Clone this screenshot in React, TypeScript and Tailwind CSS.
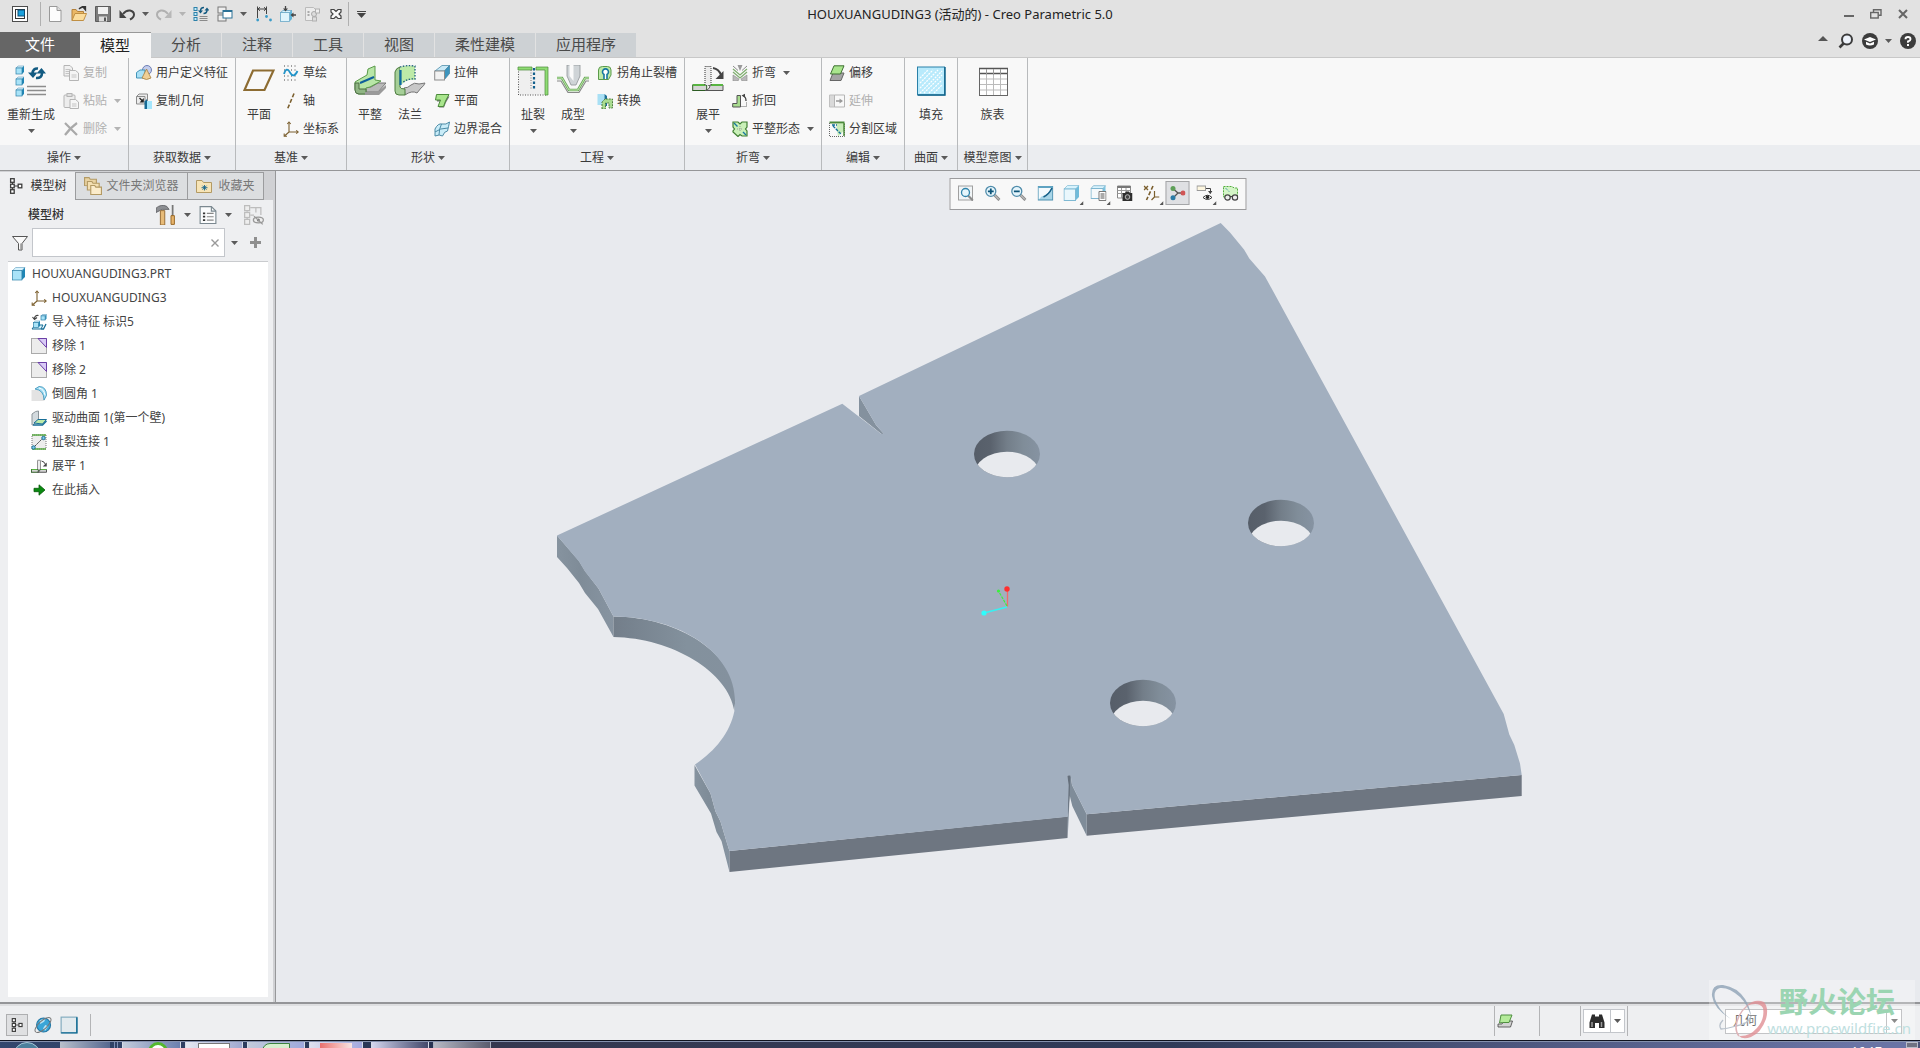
import type { ReactNode } from "react";
import clsx from "clsx";

/* ---------- helpers ---------- */

function Svg({ size = 16, box = 16, children }: { size?: number; box?: number; children: ReactNode }) {
  return (
    <svg width={size} height={size} viewBox={`0 0 ${box} ${box}`} fill="none" className="shrink-0" aria-hidden="true">
      {children}
    </svg>
  );
}

function Caret({ dim }: { dim?: boolean }) {
  return (
    <svg width="7" height="4" viewBox="0 0 7 4" className="shrink-0" aria-hidden="true">
      <path d="M0 0h7L3.5 4z" fill={dim ? "#b4b4b4" : "#5a5a5a"} />
    </svg>
  );
}

function Cube({ x, y, s }: { x: number; y: number; s: number }) {
  const d = s * 0.25;
  return (
    <g>
      <path d={`M${x} ${y + d}l${d} ${-d}h${s - d}l${-d} ${d}z`} fill="#d8f3fd" stroke="#5a9bbd" strokeWidth=".6" />
      <path d={`M${x + s - d} ${y + d}l${d} ${-d}v${s - d}l${-d} ${d}z`} fill="#1f86b5" />
      <rect x={x} y={y + d} width={s - d} height={s - d} fill="#a9e3f8" stroke="#2d81a9" strokeWidth=".7" />
    </g>
  );
}

function TreeNodes({ color = "#3c3c3c" }: { color?: string }) {
  return (
    <g stroke={color} strokeWidth="1.3">
      <path d="M4.5 4v8M6 8h4" strokeWidth="1" />
      <rect x="2.6" y=".7" width="3.6" height="3.6" fill="#fff" />
      <rect x="2.6" y="6.2" width="3.6" height="3.6" fill="#fff" />
      <rect x="2.6" y="11.7" width="3.6" height="3.6" fill="#fff" />
      <rect x="10.2" y="6.2" width="3.6" height="3.6" fill="#fff" />
    </g>
  );
}

function Magnifier({ sign }: { sign?: "plus" | "minus" }) {
  return (
    <>
      <path d="m10 10 5 5" stroke="#8b8b8b" strokeWidth="3" />
      <path d="m10 10 4.6 4.6" stroke="#d6d6d6" strokeWidth="1" />
      <circle cx="6.3" cy="6.3" r="5" fill="#e4f4fb" stroke="#4f8cab" strokeWidth="1.3" />
      {sign && <path d="M3.4 6.3h5.8" stroke="#0d5478" strokeWidth="1.8" />}
      {sign === "plus" && <path d="M6.3 3.4v5.8" stroke="#0d5478" strokeWidth="1.8" />}
    </>
  );
}

function Csys() {
  return (
    <g stroke="#7b5f2e" strokeWidth="1.1">
      <path d="M6 11V1.5M6 11h9M6 11l-4.500 4" />
      <path d="m4.300 3 1.700-2 1.700 2M13.200 9.300 15.200 11l-2 1.700M1.200 12.500v2.800h2.800" />
    </g>
  );
}

function FlatIcon() {
  return (
    <>
      <rect x=".7" y="20" width="14" height="5.500" fill="#d5d5d5" stroke="#2c5c23" />
      <path d="M16 20h15v5.500H13q5-1 5-5.500z" fill="#d5d5d5" stroke="#555" />
      <path d="M1 20h12M19 20h12" stroke="#58b441" strokeWidth="2" />
      <path d="M13 20V1.500h6V20" fill="#ececec" stroke="#333" strokeDasharray="1 1" />
      <path d="M21 3q6 1 8 7" stroke="#444" strokeWidth="2" />
      <path d="M31.500 6v8h-8z" fill="#444" />
    </>
  );
}

/* ---------- icon set ---------- */

const icons: Record<string, ReactNode> = {
  app: (
    <>
      <rect x=".5" y=".5" width="15" height="15" fill="#fff" stroke="#4d4d4d" />
      <rect x="3.500" y="3.500" width="9" height="9" fill="#fff" stroke="#333" />
      <rect x="6" y="4" width="6.500" height="6" fill="#1aa0dc" stroke="#0b4c74" />
    </>
  ),
  fresh: (
    <>
      <path d="M2.500.5h7.500l4 4v11H2.500z" fill="#fdfdfd" stroke="#999" />
      <path d="M10 .5v4h4" fill="#ddd" stroke="#999" />
    </>
  ),
  open: (
    <>
      <path d="M1 14.500v-11h4l1.500 2h6v2" fill="#eab765" stroke="#b3803a" />
      <path d="m1 14.500 3-7h11.500l-3 7z" fill="#fbdc9c" stroke="#c08f43" />
      <path d="M8 3q2-2.500 5-1.500M11.500.5h3v3.500z" stroke="#333" strokeWidth="1.300" fill="#333" />
    </>
  ),
  save: (
    <>
      <path d="M.5.5h15v15H.5z" fill="#7c7c7c" stroke="#5c5c5c" />
      <rect x="3" y="1" width="10" height="7" fill="#f2f2f2" />
      <rect x="4" y="10.500" width="8" height="5" fill="#ddd" />
      <rect x="9" y="11.500" width="2" height="3.500" fill="#555" />
    </>
  ),
  undo: (
    <>
      <path d="M4 8q3-4 7-3.500 4 1 4 4t-4 5" stroke="#444" strokeWidth="2" />
      <path d="M.5 4v8h7z" fill="#444" />
    </>
  ),
  redo: (
    <>
      <path d="M12 8Q9 4 5 4.500q-4 1-4 4t4 5" stroke="#b0b0b0" strokeWidth="2" />
      <path d="M15.500 4v8h-7z" fill="#b8b8b8" />
    </>
  ),
  regen: (
    <>
      <rect x="1" y="1.500" width="3" height="3" fill="#c4ecfb" stroke="#2d81a9" />
      <rect x="1" y="6.500" width="3" height="3" fill="#c4ecfb" stroke="#2d81a9" />
      <rect x="1" y="11.500" width="3" height="3" fill="#c4ecfb" stroke="#2d81a9" />
      <path d="M6.500 10.500h8M6.500 12.500h8M6.500 14.500h8" stroke="#8a8a8a" />
      <path d="M7.500 5q0-3.500 3.500-3.500M14 4q0 3.500-3.500 3.500" stroke="#135b82" strokeWidth="1.500" />
      <path d="M5 4.500h5L7.500 7.500zM11.500 4.500h5L14 1.500z" fill="#135b82" />
    </>
  ),
  windows: (
    <>
      <rect x="1" y="1" width="8" height="6" fill="#eee" stroke="#777" />
      <rect x="1" y="9" width="8" height="6" fill="#eee" stroke="#777" />
      <rect x="6" y="4.500" width="9" height="7.500" fill="#fff" stroke="#2c7297" />
      <path d="M6 5h9" stroke="#2c7297" strokeWidth="2" />
    </>
  ),
  dims: (
    <>
      <path d="M1.500 12V.5M10.500 8V.5M1.500 3h9" stroke="#444" />
      <path d="m4 1.200-2 1.800 2 1.800M8 1.200 10 3 8 4.800" stroke="#444" />
      <circle cx="1.700" cy="14" r="1.400" fill="#3a9cc9" />
      <circle cx="10.500" cy="10.500" r="1.400" fill="#3a9cc9" />
      <circle cx="14.500" cy="14" r="1.400" fill="#3a9cc9" />
    </>
  ),
  cubeArrows: (
    <>
      <path d="M.5 6.500 3 4.500h9L9.500 6.500z" fill="#d8f3fd" stroke="#5a9bbd" strokeWidth=".7" />
      <path d="m9.500 6.500 2.500-2v8.500l-2.500 2.500z" fill="#5fb4d8" />
      <rect x=".5" y="6.500" width="9" height="9" fill="#dff4fc" stroke="#6aa9c8" strokeWidth=".8" />
      <path d="M5.500 0v4M16 9h-4" stroke="#444" strokeWidth="1.300" />
      <path d="M3 2.500h5l-2.500 3zM13.500 6.500v5L10.500 9z" fill="#444" />
    </>
  ),
  ghost: (
    <>
      <path d="M1.500 1.500h8l2 2v11h-10z" fill="#ececec" stroke="#bbb" />
      <path d="M3.500 6h2M3.500 9h2" stroke="#aaa" strokeWidth="2" />
      <circle cx="10" cy="8" r="2.500" fill="#ddd" stroke="#aaa" />
      <rect x="11.500" y="3" width="4" height="4" fill="#eee" stroke="#b0b0b0" />
      <rect x="8.500" y="11" width="4" height="4" fill="#ddd" stroke="#b0b0b0" />
    </>
  ),
  closeWin: (
    <path d="M3 3.500h3l2 2 2-2h3v2.500L11 8l2 2v2.500h-3l-2-2-2 2H3V10l2-2-2-2z" fill="#f8f8f8" stroke="#444" strokeWidth="1.200" />
  ),
  copy: (
    <>
      <path d="M1 .5h6l2.500 2.500v8H1z" fill="#f1f1f1" stroke="#b5b5b5" />
      <path d="M2.500 4.500h5M2.500 6.500h5M2.500 8.500h4" stroke="#c4c4c4" />
      <path d="M6.500 5.500h6l3 2.500v7.500h-9z" fill="#f4f4f4" stroke="#b5b5b5" />
      <path d="M8.500 10h5M8.500 12h5" stroke="#c4c4c4" />
    </>
  ),
  paste: (
    <>
      <rect x="1" y="2" width="11" height="12.500" rx="1" fill="#ededed" stroke="#b5b5b5" />
      <rect x="4" y=".5" width="5" height="3" fill="#e0e0e0" stroke="#b5b5b5" />
      <path d="M7 6.500h5.500l3 2.500v6.500H7z" fill="#f6f6f6" stroke="#b5b5b5" />
      <path d="M9 11h4.500M9 13h4.500" stroke="#c4c4c4" />
    </>
  ),
  remove: <path d="m2 2 12 12M14 2Q7 7 2 14" stroke="#a9a9a9" strokeWidth="2.200" />,
  udf: (
    <>
      <circle cx="11" cy="5" r="4.500" fill="#c3cdec" stroke="#6f7fb5" />
      <path d="M.5 7.500 4 5h5v6l-2 2H.5z" fill="#a9e0f5" stroke="#4394b8" />
      <path d="M10.500 4 15 13q-4.500 3-9 0z" fill="#f0cf95" stroke="#a57d3d" strokeWidth=".8" />
    </>
  ),
  copyGeom: (
    <>
      <path d="M.5 3.500 3 1h8.500v8L9 11H.5z" fill="#ececec" stroke="#8c8c8c" />
      <path d="M.5 3.500H9V11" stroke="#8c8c8c" />
      <path d="m3.500 5 3 3" stroke="#222" strokeWidth="1.200" />
      <path d="M7.800 5v4.500H3.500z" fill="#222" />
      <path d="M8.500 8.500 11 6v10H8.500z" fill="#176b96" />
      <rect x="11" y="8" width="5" height="8" fill="#a5e6fc" />
    </>
  ),
  sketch: (
    <>
      <path d="M1 1h14M1 5h14M1 11h14M1 15h14" stroke="#444" strokeDasharray="1 2.500" />
      <path d="M1 9q2.500-8 6-1.500T14.500 6" stroke="#2394c9" strokeWidth="1.800" />
    </>
  ),
  axis: <path d="M11 .5 4.500 16" stroke="#7b5f2e" strokeWidth="1.600" strokeDasharray="4 2" />,
  csys: <Csys />,
  extrude: (
    <>
      <path d="m1 6 7-5.500h7.500L10.500 6z" fill="#c9e9f6" stroke="#3b7f9f" strokeWidth=".7" />
      <path d="m10.500 6 5-5.500v8l-5 6z" fill="#3d95be" stroke="#3b7f9f" strokeWidth=".7" />
      <rect x=".7" y="6" width="9.800" height="9" fill="#f2f2f2" stroke="#8c8c8c" />
    </>
  ),
  planar: (
    <>
      <path d="M3 3.500h12.500l-3.500 6-2 5H5l2.500-6H3z" fill="#777" />
      <path d="M2.500 1.500H15L11.500 8l-2 5.500H4L6.500 7H1.500z" fill="#a9e58d" stroke="#4b8a3a" />
    </>
  ),
  blend: (
    <>
      <path d="M1 8Q4 2 8 3t7.500-2q-1 5-2 9-3 0-5 5-3-2-7.500 0Q1 12 1 8z" fill="#c9ecf8" stroke="#4b8aa5" />
      <path d="M7.500 3Q5 8 5 14M1 11q5-4 13-4" stroke="#4b8aa5" />
    </>
  ),
  relief: (
    <>
      <path d="M1.500 14.500V5q0-3.500 4-3.500h5q3.500 0 3.500 3.500v5l-2.500 4.500z" fill="#bdeaa8" stroke="#5b9a4a" />
      <path d="M7 14V9.500a3 3 0 1 1 3 0V14" fill="#fff" stroke="#16779f" strokeWidth="1.600" />
    </>
  ),
  convert: (
    <>
      <path d="M.5 1h7v11h-7z" fill="#a9e0f5" />
      <path d="m7.500 1 2.500 2v10h-2.500z" fill="#1a6f98" />
      <path d="M5 16V9l3-3h7.500v9H12v-5H8.500v6z" fill="#a9dc90" stroke="#4d7d3f" strokeDasharray="2 1" />
    </>
  ),
  bend: (
    <>
      <path d="M5.500 0h5L8 6z" fill="#9a9a9a" />
      <path d="m1 4 7 6 7-6M1 7l7 6 7-6" stroke="#7fae6f" strokeWidth="1.300" />
      <path d="m1 1 5 4.500M15 1l-5 4.500" stroke="#8b8b8b" />
      <path d="M1 10v6h5l1-2zM15 10v6h-5l-1-2z" fill="#b9b9b9" stroke="#8a8a8a" strokeWidth=".6" />
    </>
  ),
  bendBack: (
    <>
      <path d="M.7 10.500H5v-8h3.500V14H.7z" fill="#a9dc90" stroke="#555" />
      <path d="M9.500 13.500h5V9" stroke="#666" strokeDasharray="1 1" />
      <path d="M14 8q0-4-2.500-5" stroke="#444" strokeWidth="1.300" />
      <path d="M9.500 2.500 13 .8v4z" fill="#444" />
    </>
  ),
  flatState: (
    <>
      <path d="M1 1h5l2 2 2-2h5v5l-1.500 2 1.500 2v5h-5l-2-1.500L6 15.500 1 11V10l1.500-2L1 6z" fill="#c9f0b8" stroke="#3f7f31" strokeWidth="1.200" />
      <path d="m2 2 3.500 3.500M11 11l3 3" stroke="#16779f" strokeWidth="1.400" />
      <path d="M5 8h6M8 5v6" stroke="#999" strokeDasharray="1 1" />
    </>
  ),
  offset: (
    <>
      <path d="M4 8h11l-3 7.500H1z" fill="#a4a4a4" stroke="#666" />
      <path d="M5 .8h10L11.500 9H1.500z" fill="#a9e58d" stroke="#3f6f33" />
    </>
  ),
  extend: (
    <>
      <path d="M.5 2h5v12h-5z" fill="#d9d9d9" stroke="#c0c0c0" />
      <path d="M5.500 2h10v12h-10z" stroke="#b5b5b5" />
      <path d="M7 8h5" stroke="#999" strokeWidth="1.500" />
      <path d="M10.500 5.500v5L14 8z" fill="#999" />
    </>
  ),
  split: (
    <>
      <path d="M.5 1.500h15" stroke="#4b8a3a" strokeWidth="2" />
      <path d="M9 15.500 15.500 9V2.500H7z" fill="#a9e58d" opacity=".6" />
      <path d="M.5 2v13.500h15V2" stroke="#666" strokeDasharray="1 1" />
      <path d="M3 4h5M4 5l8 8" stroke="#126e98" strokeWidth="1.400" strokeDasharray="3 1" />
      <path d="M15 2v13" stroke="#4b8a3a" strokeWidth="1.500" />
    </>
  ),
  tree: <TreeNodes />,
  folders: (
    <>
      <path d="M.5 7.500v-7h4l1 1.500H11v6z" fill="#e9d3a2" stroke="#b39a64" />
      <path d="M3 11.500V4h4l1 1.500h5.500v6z" fill="#f3dfb2" stroke="#b39a64" />
      <path d="M6 15.500v-8h3.500l1 1.500h5v6.500z" fill="#fbeccb" stroke="#b39a64" />
    </>
  ),
  favorites: (
    <>
      <path d="M.5 14.500v-12h5.500l1.500 2h8v10z" fill="#f7e4b6" stroke="#b39a64" />
      <path d="M8.500 7v5.500M5.500 9.700h6M6.500 7.700l4 4M10.500 7.700l-4 4" stroke="#16648c" strokeWidth=".9" />
    </>
  ),
  tools: (
    <>
      <path d="M0 2.500Q4-1 8.500 1l2 2.500H5L3 4.500 0 6z" fill="#8d8f93" stroke="#55575b" strokeWidth=".6" />
      <path d="M3.500 4.500h3.500v11.500H3.500z" fill="#e7bb78" stroke="#9a7038" strokeWidth=".8" />
      <path d="M13.300 0v9" stroke="#777" strokeWidth="1.400" />
      <path d="M12 8.500h2.700v7H12z" fill="#e7b46c" stroke="#9a6a28" strokeWidth=".8" />
    </>
  ),
  listDoc: (
    <>
      <path d="M1 .5h10l4 4v11H1z" fill="#fbfcfd" stroke="#7b8890" />
      <path d="M11 .5v4h4" stroke="#7b8890" />
      <path d="M3.500 6.500h2M3.500 9.500h2M3.500 12.500h2" stroke="#333" strokeWidth="1.500" />
      <path d="M7 6.500h6M7 9.500h6M7 12.500h6" stroke="#888" />
    </>
  ),
  treeHide: (
    <>
      <g stroke="#bdbdbd">
        <path d="M2.500 5v9M5 8h3M5 2h9M13.500 2v6M9.500 2v4" />
        <rect x=".5" y=".5" width="4" height="4" fill="#eee" />
        <rect x=".5" y="6" width="4" height="4" fill="#eee" />
        <rect x=".5" y="11.500" width="4" height="4" fill="#eee" />
      </g>
      <ellipse cx="11.500" cy="12" rx="4" ry="2.300" fill="#eee" stroke="#999" />
      <circle cx="11.500" cy="12" r="1.200" fill="#777" />
      <path d="m8 9 7 6.500" stroke="#999" />
    </>
  ),
  funnel: (
    <>
      <path d="M.5 1.500h15L10 8.500V15H6.500V8.500z" fill="#fafafa" stroke="#555" />
      <path d="M9 8.500v6" stroke="#999" strokeWidth="1.500" />
    </>
  ),
  part: <Cube x={1.500} y={1.500} s={12.500} />,
  importFeat: (
    <>
      <path d="M1 15 4 11h8l-2 4z" fill="#d8f2fb" stroke="#186e96" />
      <path d="M10 15h2.500l2.500-5" stroke="#186e96" strokeWidth="1.300" />
      <Cube x={2.500} y={7} s={6.500} />
      <Cube x={10} y={.5} s={5.500} />
      <path d="M7.500 1.500Q3.500 1 3.500 5M1.500 3l2 2.500L6 3.500" stroke="#444" strokeWidth="1.200" />
    </>
  ),
  removeFeat: (
    <>
      <rect x=".5" y=".5" width="15" height="15" fill="#ececec" stroke="#aaa" />
      <path d="M7 .5h8.500v9z" fill="#d9cbf6" />
      <path d="m7 .5 8.500 9V.5z" stroke="#6b3fa6" />
    </>
  ),
  round: (
    <>
      <path d="M.5 4h6q7 0 7 11H.5z" fill="#e3e3e3" />
      <path d="M4 3 8 .5q7.500 0 7.500 9L13 14q0-10-9-11z" fill="#a5dff5" stroke="#318db5" strokeWidth=".8" />
      <path d="M8 2q5 1 6 7" stroke="#fff" />
    </>
  ),
  driven: (
    <>
      <path d="M1 4Q5 .5 7.500 1v9L2 15H1z" fill="#d3dade" stroke="#8c959a" />
      <path d="m3 13 4-3.500h8.500L11.500 14z" fill="#bdeaa8" stroke="#186e96" />
      <path d="M2 15h9.500l4-4" stroke="#186e96" strokeWidth="1.400" />
    </>
  ),
  ripConnect: (
    <>
      <rect x="1" y="1" width="14" height="14" fill="#ededed" stroke="#777" strokeDasharray="1 1" />
      <path d="M1 1h14M1 15h14" stroke="#59a944" strokeWidth="1.500" />
      <path d="m2 14 11-11" stroke="#333" strokeDasharray="2 1" />
      <circle cx="12.500" cy="4" r="1.700" fill="#7ec9e8" stroke="#186e96" />
      <circle cx="2.500" cy="13.500" r="1.700" fill="#7ec9e8" stroke="#186e96" />
    </>
  ),
  insertHere: <path d="M3 6.300h5V2.800l6 5.200-6 5.200V9.700H3z" fill="#0a8a10" stroke="#07590b" strokeWidth=".8" />,
  refit: (
    <>
      <rect x="1" y="1" width="14" height="14" fill="#f1f5f7" stroke="#a0a0a0" />
      <path d="m10.500 10.500 5 5" stroke="#8b8b8b" strokeWidth="2.200" />
      <circle cx="8" cy="7.500" r="4" fill="#e6f6fc" stroke="#2f83aa" strokeWidth="1.300" />
    </>
  ),
  zoomIn: <Magnifier sign="plus" />,
  zoomOut: <Magnifier sign="minus" />,
  repaint: (
    <>
      <rect x=".7" y="1.500" width="14.500" height="13.500" fill="#a8d5e8" stroke="#4d90af" />
      <path d="M1.200 2h13.500Q11 10 4 11.500L1.200 14.500z" fill="#f4fafd" />
      <path d="M14.500 3Q11 10 6 12" stroke="#176087" strokeWidth="1.600" />
      <rect x=".7" y="1" width="14.500" height="2" fill="#5fa3c2" />
    </>
  ),
  shaded: (
    <>
      <path d="M.5 4 4 .5h11.500L12 4z" fill="#d8f3fd" stroke="#7fb9d3" strokeWidth=".7" />
      <path d="M12 4 15.500.5V12L12 15.500z" fill="#6fbbda" />
      <rect x=".5" y="4" width="11.500" height="11.500" fill="#eaf7fc" stroke="#7fb9d3" />
    </>
  ),
  views: (
    <>
      <path d="M.5 3.500 3 .7h12l-2.500 2.800z" fill="#d8f3fd" stroke="#6ba9c6" strokeWidth=".7" />
      <path d="M12.500 3.500 15 .7v10l-2.500 2.500z" fill="#7cc5e2" />
      <rect x=".5" y="3.500" width="12" height="10" fill="#f5f9fb" stroke="#7fb6d0" />
      <path d="M8.500 6.500h7v9h-7z" fill="#fff" stroke="#777" />
      <path d="M10 9h4M10 11h4M10 13h4" stroke="#555" />
    </>
  ),
  capture: (
    <>
      <path d="M1 1h13v12H1z" fill="#fff" stroke="#888" />
      <path d="M1 2h13" stroke="#777" strokeWidth="2" />
      <path d="M1 5.500h13M1 8.500h13M5 3v10M9.500 3v5" stroke="#9a9a9a" />
      <path d="M6 8h2.500l1-1.500h3L13.500 8H16v8H6z" fill="#2e2e2e" />
      <circle cx="11" cy="12" r="2.300" fill="#444" stroke="#bbb" />
    </>
  ),
  datumDisp: (
    <>
      <path d="m.5 1 4 4M4.500 1l-4 4" stroke="#7b5f2e" strokeWidth="1.400" />
      <path d="M9.500 1 3 15" stroke="#7b5f2e" strokeWidth="1.600" strokeDasharray="4 2" />
      <path d="M11 6v6h5M11 12l-3 3" stroke="#7b5f2e" strokeWidth="1.200" />
    </>
  ),
  annot: (
    <>
      <path d="m4 4 4.500 4H14M8.500 8 4 12.500" stroke="#555" strokeWidth="1.300" />
      <circle cx="3.500" cy="3.500" r="2.500" fill="#5e9f58" />
      <circle cx="3.500" cy="12.800" r="2.500" fill="#2b7ba6" />
      <circle cx="13.500" cy="8" r="2.500" fill="#d05555" />
    </>
  ),
  spin: (
    <>
      <rect x=".5" y="1" width="8.500" height="4.500" fill="#fdf6df" stroke="#999" />
      <path d="M9.500 3.500h4.500v5" stroke="#444" />
      <path d="M11.500 6h4.500l-2.300 3z" fill="#444" />
      <path d="M6.500 12.500q4.500-4.500 9 0-4.500 4-9 0z" fill="#fff" stroke="#333" />
      <circle cx="11" cy="12.300" r="1.700" fill="#222" />
    </>
  ),
  glasses: (
    <>
      <path d="M1 1.500h8L12 3h3v9H1z" fill="#d4f5c6" stroke="#53ad3e" strokeDasharray="2 1" />
      <path d="m3 3 4 4" stroke="#16779f" strokeDasharray="1 1" />
      <circle cx="5" cy="12.500" r="2.700" fill="#eee" stroke="#444" strokeWidth="1.200" />
      <circle cx="12.500" cy="12.500" r="2.700" fill="#eee" stroke="#444" strokeWidth="1.200" />
      <path d="M7.500 11.500h2.500" stroke="#444" strokeWidth="1.200" />
    </>
  ),
  globe: (
    <>
      <circle cx="8.500" cy="8" r="6.200" fill="#3aa5d8" stroke="#2478a6" />
      <path d="M5 4q3-2 5-1L9 5 5.500 7zM10 8l2.500 1L10 13l-2-2z" fill="#b8e4f5" />
      <ellipse cx="8" cy="8" rx="9" ry="3.600" transform="rotate(-42 8 8)" stroke="#777" strokeWidth=".9" />
    </>
  ),
  window: (
    <>
      <rect x="1" y="1" width="14" height="14" fill="#e2eaee" stroke="#7fa9bd" />
      <path d="M1 15h14V1" stroke="#0f6a93" strokeWidth="1.300" />
    </>
  ),
  geomFilter: (
    <>
      <path d="M1 11h4l2-3h8.500l-2 6H1z" fill="#d2d2d2" stroke="#444" strokeWidth=".8" />
      <path d="M4 2h11l-3 7.500H5.500L2.500 10z" fill="#b4eb9a" stroke="#4f8f40" />
    </>
  ),
  binoculars: (
    <>
      <path d="M3 1.500h3v2h4v-2h3l2.500 8V15H10v-5H6v5H.5V9.500z" fill="#2c2c2c" />
      <path d="M3 9v5M12.500 9v5" stroke="#999" strokeWidth="1.500" />
    </>
  ),
  search: (
    <>
      <path d="M6 10 1.500 14.500" stroke="#3c3c3c" strokeWidth="2.600" />
      <circle cx="9" cy="6.500" r="5" fill="#eef3fb" stroke="#3c3c3c" strokeWidth="2" />
    </>
  ),
  learn: (
    <>
      <circle cx="8" cy="8" r="8" fill="#3c3c3c" />
      <path d="M2 6.500 8 4l6 2.500L8 9z" fill="#fff" />
      <path d="M4 8.800v2.700q4 2 8 0V8.800L8 10.500z" fill="#fff" />
    </>
  ),
  help: (
    <>
      <circle cx="8" cy="8" r="8" fill="#3c3c3c" />
      <path d="M5.500 6.300Q5.500 4 8 4t2.500 2.200Q10.500 7.500 8 8.500v1.300" stroke="#fff" strokeWidth="1.900" />
      <rect x="7" y="11" width="2" height="2" fill="#fff" />
    </>
  ),
  // 32px ribbon icons
  regenBig: (
    <>
      <Cube x={1} y={1} s={8} />
      <Cube x={1} y={12} s={8} />
      <Cube x={1} y={23} s={8} />
      <path d="M12 21.500h19M12 25.500h19M12 29.500h19" stroke="#8d8d8d" strokeWidth="1.500" />
      <path d="M23 3.500q-5-.5-5.500 5M21 13q6 .5 6-5" stroke="#135b82" strokeWidth="2.600" />
      <path d="M13 7.500h9.500L18 13zM21.500 8.500H31L26.500 3z" fill="#135b82" />
    </>
  ),
  plane: <path d="M10 5.500h20.500L21.500 25H1.500z" stroke="#8d6c32" strokeWidth="2.200" />,
  flat: (
    <>
      <path d="M10 22h7l7-4h8l-8 9H7z" fill="#b9b9b9" stroke="#777" />
      <path d="M14 4 21 1v14l6 1-11 6-4 1v6H4q-3-1-3-5v-7l5-3 7-4z" fill="#b8e6a7" stroke="#5b9a4a" />
      <path d="M1 18h4v6h7v5H5q-4 0-4-4z" fill="#8fb583" stroke="#4d6f43" />
      <path d="m6 18 14-6" stroke="#0e5f9a" strokeWidth="2" />
      <path d="m11 27 14-1 7-6v3l-7 7H11z" fill="#9a9a9a" />
    </>
  ),
  flange: (
    <>
      <path d="M10 23q4 0 7-3t8-1l6-1q-1 3-4 5l-4 5q-5-3-12 2z" fill="#c8c8c8" stroke="#777" />
      <path d="M1 7Q2 3 6 2v20q0 2 5 2v6H5q-4 0-4-4z" fill="#a6cf98" stroke="#4d7d3f" />
      <path d="M6 2q6-2 15-1v14q-8-1-13 4H6z" fill="#bdeaa8" />
      <path d="M6 2q6-2 15-1v13q-7-1-13 4" stroke="#205f7d" strokeWidth="1.300" strokeDasharray="1.500 1.500" />
      <path d="M6.500 5v15" stroke="#0e6aa2" strokeWidth="2.200" />
    </>
  ),
  rip: (
    <>
      <path d="M1.500 4h28v26h-28z" fill="#efefef" />
      <path d="M1.500 4v26h28" stroke="#555" strokeDasharray="1 1.500" />
      <path d="M1 2h14v3H1zM19 2h12v28h-3V5h-9z" fill="#8fdc74" stroke="#4b8a3a" strokeWidth=".7" />
      <path d="M17 3v22" stroke="#115f8c" strokeWidth="2.200" strokeDasharray="2.500 2" />
      <path d="M14 5v20" stroke="#777" strokeDasharray="1 1.500" />
    </>
  ),
  form: (
    <>
      <path d="M10 0h13v11l-4 9h-5l-4-9z" fill="#cfd4d7" stroke="#8d9295" strokeWidth=".8" />
      <path d="M12.500 0h4v16l-4-5z" fill="#fafafa" />
      <path d="M0 13h5l7 12h9l7-12h4" stroke="#6fa860" strokeWidth="2.600" />
      <path d="M0 16h4l7 11.500h11L29 16h3" stroke="#888" strokeWidth="1.200" />
      <path d="M0 13h5l7 12h9l7-12h4" stroke="#bdeaa8" strokeWidth="1" />
    </>
  ),
  unbend: <FlatIcon />,
  unbendSmall: (
    <g transform="scale(.5) translate(0 3)" strokeWidth="2">
      <FlatIcon />
    </g>
  ),
  fillBig: (
    <>
      <rect x="2.500" y="2" width="27" height="28" fill="#b8eafc" stroke="#2980a8" />
      <path d="m5 13 8-8M5 18 18 5M5 23 23 5M5 28 27 6M9 28l18-18M14 28l13-13M19 28l8-8" stroke="#fff" strokeWidth="1.300" strokeDasharray="2 1" />
      <path d="M3 30h27V2" stroke="#14658c" strokeWidth="1.500" />
    </>
  ),
  family: (
    <>
      <rect x="2.500" y="3.500" width="28" height="27" fill="#fff" stroke="#666" />
      <path d="M3 14h27M3 19.500h27M3 25h27M9.500 9v21M16.500 9v21M23.500 9v21" stroke="#bbb" />
      <path d="M2 3.500h29M3 8.500h27" stroke="#555" strokeWidth="1.600" />
      <path d="M9.500 4v5M16.500 4v5M23.500 4v5" stroke="#999" />
    </>
  ),
};

function Icon({ name, size = 16, box = 16 }: { name: string; size?: number; box?: number }) {
  return (
    <Svg size={size} box={box}>
      {icons[name]}
    </Svg>
  );
}

/* ---------- title bar ---------- */

function QuickButton({ name }: { name: string }) {
  return (
    <button aria-label={name} className="flex h-6 w-6 items-center justify-center">
      <Icon name={name} />
    </button>
  );
}

function QuickCaret({ dim }: { dim?: boolean }) {
  return (
    <button aria-label="more" className="flex h-6 w-[13px] items-center justify-center">
      <Caret dim={dim} />
    </button>
  );
}

function TitleBar() {
  return (
    <header className="grid h-8 grid-cols-[1fr_auto_1fr] items-start pt-0.5">
      <div className="flex items-center">
        <button aria-label="app" className="ml-2 flex h-6 w-6 items-center justify-center">
          <Icon name="app" />
        </button>
        <div className="mr-0.5 ml-2 h-6 w-px bg-[#b0b0b0]" />
        <QuickButton name="fresh" />
        <QuickButton name="open" />
        <QuickButton name="save" />
        <QuickButton name="undo" />
        <QuickCaret />
        <QuickButton name="redo" />
        <QuickCaret dim />
        <QuickButton name="regen" />
        <QuickButton name="windows" />
        <QuickCaret />
        <div className="ml-0.5 flex">
          <QuickButton name="dims" />
          <QuickButton name="cubeArrows" />
          <QuickButton name="ghost" />
          <QuickButton name="closeWin" />
        </div>
        <div className="h-6 w-px bg-[#b0b0b0]" />
        <button aria-label="customize" className="flex h-6 w-6 items-center justify-center">
          <svg width="9" height="7" viewBox="0 0 9 7">
            <path d="M0 .5h9" stroke="#444" />
            <path d="M0 2h9L4.500 7z" fill="#444" />
          </svg>
        </button>
      </div>
      <h1 className="text-[13px] leading-6 text-[#222]">HOUXUANGUDING3 (活动的) - Creo Parametric 5.0</h1>
      <div className="flex h-6 justify-end gap-[3px] pr-[5px]">
        <button aria-label="minimize" className="flex w-6 items-center justify-center">
          <svg width="10" height="10" viewBox="0 0 10 10">
            <path d="M0 7h10" stroke="#666" strokeWidth="2" />
          </svg>
        </button>
        <button aria-label="restore" className="flex w-6 items-center justify-center">
          <svg width="12" height="10" viewBox="0 0 12 10" fill="none" stroke="#666">
            <path d="M3.500 3V.8h7.500v5.500H8.500" strokeWidth="1.400" />
            <rect x=".7" y="3.500" width="7.500" height="5.500" strokeWidth="1.400" />
          </svg>
        </button>
        <button aria-label="close" className="flex w-6 items-center justify-center">
          <svg width="10" height="10" viewBox="0 0 10 10">
            <path d="m1 1 8 8M9 1 1 9" stroke="#666" strokeWidth="2" />
          </svg>
        </button>
      </div>
    </header>
  );
}

const tabs = ["分析", "注释", "工具", "视图", "柔性建模", "应用程序"];

function TabBar() {
  return (
    <nav className="flex h-[26px] text-[15px] leading-[22px] text-[#4a4a4a]">
      <button className="bg-[#666] px-[25px] pb-0.5 text-white">文件</button>
      <button className="border-t border-[#999] bg-[#f8f8f8] pr-[21px] pb-0.5 pl-5 text-[#222]">模型</button>
      <div className="flex gap-px border-b border-[#c8c8c8] pt-px">
        {tabs.map((tab) => (
          <button key={tab} className="bg-[#cdd1d4] px-5 pb-0.5">
            {tab}
          </button>
        ))}
      </div>
      <div className="flex flex-1 items-start justify-end gap-2 border-b border-[#c8c8c8] pr-1">
        <button aria-label="collapse" className="mr-0.5 flex h-3 items-center">
          <svg width="10" height="5" viewBox="0 0 10 5">
            <path d="M0 5h10L5 0z" fill="#555" />
          </svg>
        </button>
        <button aria-label="search" className="pt-px">
          <Icon name="search" />
        </button>
        <div className="flex items-center gap-[7px] pt-px">
          <button aria-label="learn">
            <Icon name="learn" />
          </button>
          <Caret />
        </div>
        <button aria-label="help" className="pt-px">
          <Icon name="help" />
        </button>
      </div>
    </nav>
  );
}

/* ---------- ribbon ---------- */

function Big({ icon, label, menu, className = "w-10" }: { icon: string; label: string; menu?: boolean; className?: string }) {
  return (
    <button className={clsx("flex flex-col items-center pt-1.5", className)}>
      <Icon name={icon} size={32} box={32} />
      <span className="mt-2 mb-1 leading-5">{label}</span>
      {menu && <Caret />}
    </button>
  );
}

function Small({ icon, label, menu, disabled }: { icon: string; label: string; menu?: boolean; disabled?: boolean }) {
  return (
    <button disabled={disabled} className="flex h-7 items-center gap-1 disabled:text-[#b0b0b0]">
      <Icon name={icon} />
      <span>{label}</span>
      {menu && (
        <span className="ml-[3px] flex">
          <Caret dim={disabled} />
        </span>
      )}
    </button>
  );
}

function Group({ title, className, children }: { title: string; className: string; children: ReactNode }) {
  return (
    <section className={clsx("flex flex-col border-r border-[#b8babc]", className)}>
      <div className="flex flex-1 pt-px">{children}</div>
      <button className="flex h-[25px] items-center justify-center gap-[3px] bg-[#ebedf0]">
        {title}
        <Caret />
      </button>
    </section>
  );
}

function Ribbon() {
  return (
    <div className="flex h-[113px] border-b border-[#959698] bg-[#f8f8f8] text-xs whitespace-nowrap text-[#3a3a3a]">
      <Group title="操作" className="w-[129px]">
        <Big icon="regenBig" label="重新生成" menu className="w-[62px]" />
        <div className="pl-px">
          <Small icon="copy" label="复制" disabled />
          <Small icon="paste" label="粘贴" menu disabled />
          <Small icon="remove" label="删除" menu disabled />
        </div>
      </Group>
      <Group title="获取数据" className="w-[107px]">
        <div className="pl-[7px]">
          <Small icon="udf" label="用户定义特征" />
          <Small icon="copyGeom" label="复制几何" />
        </div>
      </Group>
      <Group title="基准" className="w-[111px]">
        <Big icon="plane" label="平面" className="w-[46px]" />
        <div className="pl-px">
          <Small icon="sketch" label="草绘" />
          <Small icon="axis" label="轴" />
          <Small icon="csys" label="坐标系" />
        </div>
      </Group>
      <Group title="形状" className="w-[163px]">
        <div className="flex px-[3px]">
          <Big icon="flat" label="平整" />
          <Big icon="flange" label="法兰" />
        </div>
        <div className="pl-px">
          <Small icon="extrude" label="拉伸" />
          <Small icon="planar" label="平面" />
          <Small icon="blend" label="边界混合" />
        </div>
      </Group>
      <Group title="工程" className="w-[175px]">
        <div className="flex px-[3px]">
          <Big icon="rip" label="扯裂" menu />
          <Big icon="form" label="成型" menu />
        </div>
        <div className="pl-px">
          <Small icon="relief" label="拐角止裂槽" />
          <Small icon="convert" label="转换" />
        </div>
      </Group>
      <Group title="折弯" className="w-[137px]">
        <div className="flex px-[3px]">
          <Big icon="unbend" label="展平" menu />
        </div>
        <div className="pl-px">
          <Small icon="bend" label="折弯" menu />
          <Small icon="bendBack" label="折回" />
          <Small icon="flatState" label="平整形态" menu />
        </div>
      </Group>
      <Group title="编辑" className="w-[83px]">
        <div className="pl-[7px]">
          <Small icon="offset" label="偏移" />
          <Small icon="extend" label="延伸" disabled />
          <Small icon="split" label="分割区域" />
        </div>
      </Group>
      <Group title="曲面" className="w-[53px]">
        <Big icon="fillBig" label="填充" className="w-full" />
      </Group>
      <Group title="模型意图" className="w-[70px]">
        <Big icon="family" label="族表" className="w-full" />
      </Group>
      <div className="mt-[87px] flex-1 bg-[#ebedf0]" />
    </div>
  );
}

/* ---------- model tree ---------- */

const features = [
  { icon: "csys", label: "HOUXUANGUDING3" },
  { icon: "importFeat", label: "导入特征 标识5" },
  { icon: "removeFeat", label: "移除 1" },
  { icon: "removeFeat", label: "移除 2" },
  { icon: "round", label: "倒圆角 1" },
  { icon: "driven", label: "驱动曲面 1(第一个壁)" },
  { icon: "ripConnect", label: "扯裂连接 1" },
  { icon: "unbendSmall", label: "展平 1" },
  { icon: "insertHere", label: "在此插入" },
];

function Sidebar() {
  return (
    <aside className="flex w-[276px] shrink-0 flex-col border-r border-[#97989a] bg-[#d0d1d4] pt-px pr-0.5 text-xs text-[#444]">
      <div className="flex h-7">
        <button className="flex w-[75px] items-center justify-center gap-1.5 bg-[#eeeff1] text-[#333]">
          <Icon name="tree" />
          模型树
        </button>
        <button className="flex w-[113px] items-center justify-center gap-1 border border-[#9b9c9e] bg-[#dcdee0] text-[#777]">
          <Icon name="folders" size={18} />
          文件夹浏览器
        </button>
        <button className="flex w-[76px] items-center justify-center gap-1.5 border border-l-0 border-[#9b9c9e] bg-[#dcdee0] text-[#777]">
          <Icon name="favorites" />
          收藏夹
        </button>
      </div>
      <div className="flex flex-1 flex-col bg-[#eeeff1] pr-1 pb-[5px] pl-2">
        <div className="flex h-7 items-center pt-px pl-5">
          <h2 className="flex-1 font-medium text-[#333]">模型树</h2>
          <div className="flex items-center gap-2 pr-[5px]">
            <button aria-label="settings" className="flex items-center gap-2">
              <Icon name="tools" size={20} />
              <Caret />
            </button>
            <button aria-label="display" className="flex items-center gap-2">
              <Icon name="listDoc" size={18} />
              <Caret />
            </button>
            <button aria-label="hide" className="ml-1">
              <Icon name="treeHide" size={20} />
            </button>
          </div>
        </div>
        <div className="mb-1 flex h-[29px] items-center pl-1">
          <label htmlFor="tree-filter" aria-label="filter">
            <Icon name="funnel" />
          </label>
          <div className="ml-1 flex h-[29px] w-[193px] items-center border border-[#c3c6cb] bg-white pr-[5px]">
            <input id="tree-filter" className="min-w-0 flex-1 px-1 outline-none" />
            <button aria-label="clear">
              <svg width="8" height="8" viewBox="0 0 8 8">
                <path d="m.5.5 7 7M7.500.5l-7 7" stroke="#999" strokeWidth="1.400" />
              </svg>
            </button>
          </div>
          <button aria-label="options" className="ml-1.5">
            <Caret />
          </button>
          <button aria-label="add" className="ml-3">
            <svg width="11" height="11" viewBox="0 0 11 11">
              <path d="M5.500 0v11M0 5.500h11" stroke="#8f8f8f" strokeWidth="3" />
            </svg>
          </button>
        </div>
        <ul className="mr-px flex-1 border-t border-[#c9cbce] bg-white">
          <li className="flex h-6 items-center gap-[5px] pl-[3px]">
            <Icon name="part" />
            HOUXUANGUDING3.PRT
          </li>
          {features.map((feature) => (
            <li key={feature.label} className="flex h-6 items-center gap-[5px] pl-[23px]">
              <Icon name={feature.icon} />
              {feature.label}
            </li>
          ))}
        </ul>
      </div>
    </aside>
  );
}

/* ---------- graphics area ---------- */

const viewTools = [
  { icon: "refit" },
  { icon: "zoomIn" },
  { icon: "zoomOut" },
  { icon: "repaint" },
  { icon: "shaded", more: true },
  { icon: "views", more: true },
  { icon: "capture" },
  { icon: "datumDisp", more: true },
  { icon: "annot", active: true },
  { icon: "spin", more: true },
  { icon: "glasses" },
];

const holes = [
  { cx: 1007, cy: 454 },
  { cx: 1281, cy: 523 },
  { cx: 1143, cy: 703 },
];

function Model() {
  return (
    <svg viewBox="276 171 1644 831" className="h-full w-full" fill="none" role="img" aria-label="HOUXUANGUDING3">
      <defs>
        <linearGradient id="bore">
          <stop offset="0" stopColor="#565e69" />
          <stop offset=".25" stopColor="#5a626d" />
          <stop offset=".5" stopColor="#737e89" />
          <stop offset=".75" stopColor="#808d99" />
          <stop offset="1" stopColor="#8693a2" />
        </linearGradient>
        <linearGradient id="arc">
          <stop offset="0" stopColor="#737e8a" />
          <stop offset=".6" stopColor="#83919d" />
          <stop offset="1" stopColor="#84919e" />
        </linearGradient>
        <linearGradient id="edge">
          <stop offset="0" stopColor="#86939f" />
          <stop offset=".4" stopColor="#7f8c98" />
          <stop offset="1" stopColor="#8794a1" />
        </linearGradient>
        {holes.map((hole) => (
          <clipPath key={hole.cx} id={`hole-${hole.cx}`}>
            <ellipse cx={hole.cx} cy={hole.cy} rx="33" ry="23.300" />
          </clipPath>
        ))}
      </defs>
      {/* side walls */}
      <path d="M557 535.500 579 561l6 10 13.500 17.500 15 28V637L598 609l-13-16-6-10-12-15-10-11z" fill="url(#edge)" />
      <path d="M613.500 616.500C680 617 736 655 735.500 698L734.300 711C729 672 672 638 613.500 637z" fill="url(#arc)" />
      <path d="m694.500 765 16 28.500 5 18 5 10 6 20 3 9.500v21l-8-31-5-9-5.500-18.500-16.500-28z" fill="url(#edge)" />
      <path d="m729.500 851 338.500-34.500-.5 21.500-338 34zM1086.700 814.300l435-39.300v21l-435 39.700z" fill="#6e7681" />
      <path d="m1067.300 775.500 3.400-.5 1.300 10 14.700 29.300v21.400L1072.300 806l-2.600-10.500-2 42z" fill="#7f8c99" />
      <path d="m1067.300 775.500 3-.5-.6 20.500-2 21z" fill="#66707c" />
      <path d="M859 396v20l22.500 18h2.500l-8-9z" fill="#84919e" />
      {/* top face */}
      <path
        d="M557 535.500 842.300 403.700 881 433.700h2.700L876 425l-17-29L1220.700 223l9.300 9.400 14 17 5.300 9 15.700 18L1503.700 714l5.600 20.600 5 10.400 5.700 18.500 1.700 11.500-435 39.300L1072 785l-1.300-9.500h-3.400l1.400 9.500-1 31.700L729.500 851l-3-9.500-6-20-5-10-5-18-15.500-29C715 751 730 733 734.400 711 742 658 685 617 613.500 616.500l-15-28L585 571.500l-6-10z"
        fill="#a2afbf"
      />
      {holes.map((hole) => (
        <g key={hole.cx} clipPath={`url(#hole-${hole.cx})`}>
          <rect x={hole.cx - 33} y={hole.cy - 24} width="66" height="48" fill="url(#bore)" />
          <ellipse cx={hole.cx} cy={hole.cy + 21} rx="33" ry="23.300" fill="#e8eaee" />
        </g>
      ))}
      {/* spin centre */}
      <path d="M1007.500 606.500V590" stroke="#f26a6a" strokeWidth="1.300" />
      <path d="m1007 606-8.500-15" stroke="#3df03d" strokeWidth="1.200" strokeDasharray="3 1" />
      <path d="M1007 607 984 613" stroke="#35f2f2" strokeWidth="1.300" />
      <circle cx="1007" cy="589" r="2.700" fill="#ff2f2f" />
      <circle cx="998.500" cy="591" r="1.600" fill="#3cf03c" />
      <circle cx="984" cy="613" r="2.600" fill="#2ffcfc" />
    </svg>
  );
}

function Viewport() {
  return (
    <main className="relative min-w-0 flex-1 bg-[#e8eaee]">
      <div className="absolute top-[7px] left-1/2 flex h-8 w-[297px] -translate-x-1/2 items-center justify-between border border-[#9b9b9d] bg-[#f8f8f8] px-[3px] pb-0.5">
        {viewTools.map((tool) => (
          <button
            key={tool.icon}
            aria-label={tool.icon}
            className={clsx(
              "relative flex h-6 w-6 items-center justify-center",
              tool.active && "border border-[#a5a6a8] bg-[#dfe0e3]"
            )}
          >
            <Icon name={tool.icon} />
            {tool.more && (
              <svg width="4" height="4" viewBox="0 0 4 4" className="absolute right-0 bottom-0">
                <path d="M4 0v4H0z" fill="#555" />
              </svg>
            )}
          </button>
        ))}
      </div>
      <Model />
    </main>
  );
}

/* ---------- status bar and taskbar ---------- */

function Watermark() {
  return (
    <div className="pointer-events-none absolute right-[5px] -bottom-0.5 h-[62px] w-[206px] bg-white/30">
      <svg width="60" height="62" viewBox="0 0 60 62" fill="none" className="absolute top-0 left-0">
        <path d="M3 16Q2 4 14 5q14 2 22 14 5 8 6 17-4-12-11-19Q20 7 11 8q-7 2-5 11 4 12 16 20Q5 29 3 16z" fill="#8fa3b5" opacity=".8" />
        <path d="M42 36Q40 44 27 46q-10 3-15 3-3-4 2-9" stroke="#b9c2cc" strokeWidth="1.300" />
        <path d="M37 26Q46 18 55 22q5 6 2 17-5 14-15 18-8 3-12-1 10 1 18-8 8-9 6-20-4-7-17-2z" fill="#e08e93" opacity=".8" />
        <path d="M30 56q-6-7 0-20 3-6 8-10" stroke="#dfb4b8" strokeWidth="1.500" />
      </svg>
      <div className="absolute top-0 right-0 text-right">
        <p className="pr-5 font-['Noto_Sans_CJK_SC',sans-serif] text-[29px] leading-10 font-bold text-[#9bd5b2]">野火论坛</p>
        <p className="pr-1 text-[15px] leading-4 text-[#bfe0df]">www.proewildfire.cn</p>
      </div>
    </div>
  );
}

function StatusBar() {
  return (
    <footer className="relative flex h-[38px] items-stretch border-t-2 border-[#949598] bg-[#eeeff1] text-xs">
      <div className="flex flex-1 items-center gap-2.5 border-t-2 border-[#dedfe1] pt-1 pl-1.5">
        <button aria-label="navigator" className="flex h-[22px] w-[22px] items-center justify-center border border-[#aeafb1] bg-[#dfe0e2]">
          <Icon name="tree" size={14} />
        </button>
        <button aria-label="browser" className="-ml-1">
          <Icon name="globe" size={18} />
        </button>
        <button aria-label="full screen" className="-ml-0.5">
          <Icon name="window" size={18} />
        </button>
        <div className="ml-0.5 h-[22px] w-px bg-[#b3b4b6]" />
      </div>
      <div className="flex items-stretch border-t-2 border-[#dedfe1] pb-1">
        <div className="flex w-[45px] items-center border-l border-[#b3b4b6] pl-0.5">
          <Icon name="geomFilter" />
        </div>
        <div className="w-[41px] border-l border-[#b3b4b6]" />
        <div className="flex w-12 items-center border-x border-[#b3b4b6] pl-0.5">
          <div className="flex h-6 w-[42px] border border-[#c3c6cb] bg-white">
            <button aria-label="find" className="flex flex-1 items-center justify-center border-r border-[#c3c6cb]">
              <Icon name="binoculars" />
            </button>
            <button aria-label="find options" className="flex w-[13px] items-center justify-center">
              <Caret />
            </button>
          </div>
        </div>
        <div className="relative mr-[18px] ml-[97px] self-center">
          <select aria-label="selection filter" className="block h-[25px] w-[177px] appearance-none border border-[#a9abae] bg-white pl-[7px] text-[#333] outline-none">
            <option>几何</option>
          </select>
          <div className="pointer-events-none absolute inset-y-0 right-0 flex w-4 items-center justify-center border-l border-[#a9abae]">
            <Caret />
          </div>
        </div>
      </div>
      <Watermark />
    </footer>
  );
}

function Taskbar() {
  return (
    <div className="relative flex h-2 overflow-hidden border-t border-[#10131f] bg-linear-to-r from-[#33476e] via-[#1b1e33] to-[#4d5378]">
      <div className="flex w-full border-t border-[#8490ad]">
        <div className="ml-[13px] h-6 w-7 rounded-t-full border border-[#a8c8d8] bg-[#4c7f9c]" />
        <div className="ml-[19px] w-[50px] bg-linear-to-r from-[#b9c0cc] to-[#56688f]" />
        <div className="mx-1 w-1 border-x border-[#7e8fb5]" />
        <div className="flex w-[59px] justify-end border-x border-[#d5dbe8] bg-linear-to-r from-[#c3cbdb] to-[#6c80ae] pr-3">
          <div className="h-5 w-5 rounded-full border-[3px] border-[#55b82e] bg-white" />
        </div>
        <div className="ml-1 flex w-[58px] justify-center border-x border-[#d5dbe8] bg-linear-to-r from-[#e5e8f2] to-[#9fa8d0] pt-px">
          <div className="h-5 w-8 border border-[#777] bg-white" />
        </div>
        <div className="ml-1 flex w-[58px] justify-center border-x border-[#d5dbe8] bg-linear-to-r from-[#c3cbdb] to-[#9fa8dc] pt-px">
          <div className="h-5 w-7 rounded-tl-lg border border-[#3c8240] bg-[#d7efcf]" />
        </div>
        <div className="ml-1 flex w-[54px] justify-center border-x border-[#d5dbe8] bg-linear-to-r from-[#dfe0ef] to-[#a3a8df] pt-px">
          <div className="h-5 w-8 bg-linear-to-r from-[#e86f6f] to-[#f6e4e4]" />
        </div>
        <div className="ml-2 w-[58px] border-x border-[#d5dbe8] bg-linear-to-r from-[#d5d7ef] to-[#44496b]" />
        <div className="ml-1 w-[58px] border-x border-[#aab0c0] bg-linear-to-r from-[#b7b9c4] to-[#5b5d6f]" />
        <div className="flex-1 bg-linear-to-r from-[#353850] via-[#303a58] to-[#6a74a5]" />
        <span className="bg-[#6a74a5] pt-1 pr-6 text-xs leading-3 text-white">16:17</span>
        <div className="mr-0.5 w-3 border border-[#b9bdc9] bg-[#6f7282]" />
      </div>
    </div>
  );
}

export default function App() {
  return (
    <div className="flex h-screen min-w-[1100px] flex-col overflow-hidden bg-[#e2e2e2] font-['Noto_Sans','Noto_Sans_CJK_SC',sans-serif]">
      <TitleBar />
      <TabBar />
      <Ribbon />
      <div className="flex min-h-0 flex-1">
        <Sidebar />
        <Viewport />
      </div>
      <StatusBar />
      <Taskbar />
    </div>
  );
}
